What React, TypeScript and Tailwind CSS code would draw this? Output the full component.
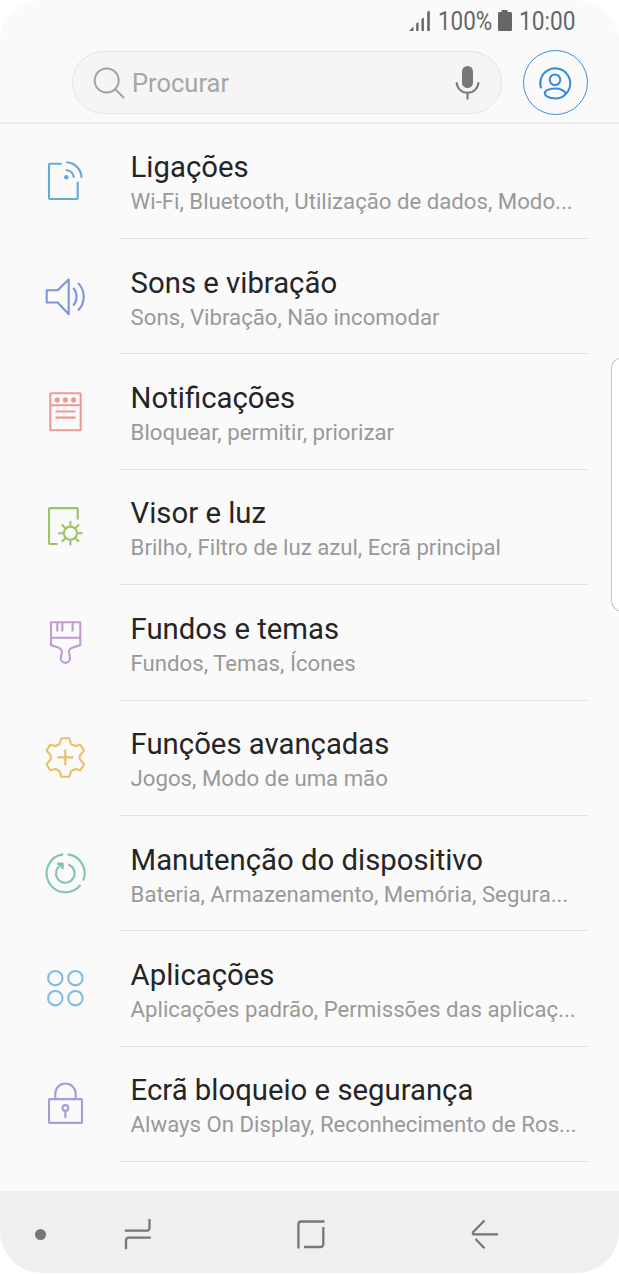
import React from 'react';

interface SettingsItem {
    title: string;
    summary: string;
    color: string;
    icon: React.ReactNode;
}

const sunRays = [0, 45, 90, 135, 180, 225, 270, 315];

const items: SettingsItem[] = [
    {
        title: 'Ligações',
        summary: 'Wi-Fi, Bluetooth, Utilização de dados, Modo...',
        color: 'text-[#66a9d3]',
        icon: (
            <>
                <path d="M18.7 4.7H7Q6 4.7 6 5.7V39Q6 40 7 40H33.7Q34.7 40 34.7 39V22.7" />
                <path d="M22.7 11A8.3 8.3 0 0 1 31 18.8M23.3 3.3A15.6 15.6 0 0 1 38.5 18.8" />
                <circle cx="23.3" cy="18.3" r="2.3" fill="currentColor" stroke="none" />
            </>
        ),
    },
    {
        title: 'Sons e vibração',
        summary: 'Sons, Vibração, Não incomodar',
        color: 'text-[#7f94da]',
        icon: (
            <>
                <path d="M3.7 15.3H14.7L25.7 4.5V39.2L14.7 27.5H3.7Z" />
                <path d="M30.3 13A13.5 13.5 0 0 1 30.3 30.6M35 8A19.5 19.5 0 0 1 35 35.6" />
            </>
        ),
    },
    {
        title: 'Notificações',
        summary: 'Bloquear, permitir, priorizar',
        color: 'text-[#ed9a91]',
        icon: (
            <>
                <rect x="7.3" y="3.2" width="30.4" height="37" rx="0.8" />
                <path d="M7.3 15.2H37.7M12.5 21.5H32.5M12.5 27.6H32.5" />
                <g fill="currentColor" stroke="none">
                    <circle cx="14.3" cy="9.9" r="2.6" />
                    <circle cx="22.4" cy="9.9" r="2.6" />
                    <circle cx="30.5" cy="9.9" r="2.6" />
                </g>
            </>
        ),
    },
    {
        title: 'Visor e luz',
        summary: 'Brilho, Filtro de luz azul, Ecrã principal',
        color: 'text-[#9fc364]',
        icon: (
            <>
                <path d="M34.7 14.5V4.1Q34.7 3.1 33.7 3.1H7Q6 3.1 6 4.1V38Q6 39 7 39H14.7" />
                <circle cx="27.4" cy="28.2" r="6.6" />
                {sunRays.map(a => (
                    <path key={a} d="M27.4 21.3V16" transform={`rotate(${a} 27.4 28.2)`} />
                ))}
            </>
        ),
    },
    {
        title: 'Fundos e temas',
        summary: 'Fundos, Temas, Ícones',
        color: 'text-[#c19bd2]',
        icon: (
            <>
                <path d="M8 1.2H37.3V24C32 26.5 26.7 25.8 26 30C25.7 32.5 27 34.5 27 37.3A4.6 4.6 0 0 1 17.8 37.3C17.8 34.5 19 32.5 18.8 30C18 25.8 13 26.5 8 24Z" />
                <path d="M8 16.7H37.3M14.3 1.2V10.4M19.3 1.2V10.4M29.6 1.2V10.4" />
            </>
        ),
    },
    {
        title: 'Funções avançadas',
        summary: 'Jogos, Modo de uma mão',
        color: 'text-[#eabf69]',
        icon: (
            <>
                <path d="M18.3 2.2H26.3L28 8L32.2 10L37.5 8.7L41 14.6L36.8 19.5V23.3L41 28.2L37.5 34.3L32.2 33L28 35.2L26.3 40.8H18.3L16.6 35.2L12.4 33L7.1 34.3L3.6 28.2L7.8 23.3V19.5L3.6 14.6L7.1 8.7L12.4 10L16.6 8Z" />
                <path d="M14.5 21.4H30.1M22.3 13.6V29.2" />
            </>
        ),
    },
    {
        title: 'Manutenção do dispositivo',
        summary: 'Bateria, Armazenamento, Memória, Segura...',
        color: 'text-[#80c4b2]',
        icon: (
            <>
                <path d="M24.8 2.4A19 19 0 0 1 40.2 28.6M37.6 32.9A19 19 0 1 1 20.2 2.4" />
                <path d="M25.3 12.6A9.3 9.3 0 1 1 15.5 15.1L19.3 11.8" />
                <path d="M14.2 11.8H19.5V17" strokeWidth="2.5" />
            </>
        ),
    },
    {
        title: 'Aplicações',
        summary: 'Aplicações padrão, Permissões das aplicaç...',
        color: 'text-[#80bce0]',
        icon: (
            <>
                <circle cx="12.3" cy="11.2" r="7.2" />
                <circle cx="32.4" cy="11.2" r="7.2" />
                <circle cx="12.3" cy="31.2" r="7.2" />
                <circle cx="32.4" cy="31.2" r="7.2" />
            </>
        ),
    },
    {
        title: 'Ecrã bloqueio e segurança',
        summary: 'Always On Display, Reconhecimento de Ros...',
        color: 'text-[#a99ae0]',
        icon: (
            <>
                <rect x="6" y="17.1" width="33" height="23.8" rx="0.8" />
                <path d="M12.3 17V11.7A10.2 10.2 0 0 1 32.7 11.7V17M22.4 29V36" />
                <circle cx="22.4" cy="26" r="2.9" />
            </>
        ),
    },
];

const StatusBar: React.FC = () => (
    <div className="flex h-[42px] items-center justify-end pr-[43px] text-[25.5px] leading-none text-[#666]">
        <svg width="23" height="22" viewBox="0 0 23 22" fill="currentColor" className="mr-[6px]">
            <path d="M0 21L4.5 16.5V21ZM7.2 13.5L9.5 12V21H7.2ZM12.5 9L14.9 7.5V21H12.5ZM18.2 2L20.8 .5V21H18.2Z" />
        </svg>
        <span className="w-[55px] shrink-0">
            <span className="inline-block origin-left translate-y-px scale-x-[0.88] whitespace-nowrap">100%</span>
        </span>
        <svg width="16" height="22" viewBox="0 0 16 22" fill="currentColor" className="mr-[6px] ml-[4px]">
            <path d="M4.5 0H10.5V2H13.5Q15 2 15 3.5V19.5Q15 21 13.5 21H2.5Q1 21 1 19.5V3.5Q1 2 2.5 2H4.5Z" />
        </svg>
        <span className="w-[57px] shrink-0">
            <span className="inline-block origin-left translate-y-px scale-x-[0.89] whitespace-nowrap">10:00</span>
        </span>
    </div>
);

const SearchBar: React.FC = () => (
    <div className="flex items-center pt-[8px] pr-[31px] pl-[72px]">
        <div className="flex h-[63px] w-[430px] items-center rounded-full border border-[#e4e4e4] bg-[#f5f5f5] pr-[17px] pl-[20px]">
            <svg width="34" height="34" viewBox="0 0 34 34" fill="none" stroke="#a2a2a2" strokeWidth="2">
                <circle cx="13.7" cy="14.5" r="12" />
                <path d="M22.5 23.5L31 32" />
            </svg>
            <span className="ml-[5px] flex-1 text-[25.5px] leading-[30px] text-[#a6a6a6]">Procurar</span>
            <svg width="32" height="36" viewBox="0 0 32 36" fill="none" stroke="#777" strokeWidth="2">
                <rect x="10" y="1" width="11" height="22" rx="5.5" fill="#777" stroke="none" />
                <path d="M4.6 17.3C5 23.5 9.5 27.8 15.5 27.8S26.1 23.5 26.5 17.3M15.5 27.8V34.5" />
            </svg>
        </div>
        <button className="ml-[21px] flex size-[65px] items-center justify-center rounded-full border border-[#3f8ddb]">
            <svg width="36" height="36" viewBox="0 0 36 36" fill="none" stroke="#3589dc" strokeWidth="2" className="-ml-px">
                <path d="M4.1 23.4A15 15 0 1 1 29 28.8" />
                <circle cx="18" cy="14.7" r="5.3" />
                <path d="M29 28.8C27 25 23 23.4 18 23.4C12 23.4 7.8 25.7 7.8 28.2C7.8 31 12.5 33.4 18 33.4C22.5 33.4 26.5 31.8 29 28.8Z" />
            </svg>
        </button>
    </div>
);

const SettingsRow: React.FC<{ item: SettingsItem }> = ({ item }) => (
    <li className="flex h-[115.4px] pr-[31px] pl-[43px]">
        <div className={`flex w-[77px] shrink-0 items-center ${item.color}`}>
            <svg width="44" height="44" viewBox="0 0 44 44" fill="none" stroke="currentColor" strokeWidth="2.1" strokeLinejoin="round" className="overflow-visible">
                {item.icon}
            </svg>
        </div>
        <div className="min-w-0 flex-1 border-b border-[#e3e3e3] pt-[25.7px] pl-[10.6px] whitespace-nowrap">
            <h2 className="text-[29.3px] leading-9 text-[#252525]">{item.title}</h2>
            <p className="mt-[2px] text-[22.2px] leading-7 text-[#999]">{item.summary}</p>
        </div>
    </li>
);

const NavBar: React.FC = () => (
    <nav className="flex h-[82px] items-start bg-[#efefef] pt-[27px] pl-[35px] text-[#777]">
        <span className="mt-[11px] size-[11px] rounded-full bg-[#777]" />
        <svg width="32" height="32" viewBox="0 0 32 32" fill="none" stroke="currentColor" strokeWidth="2.3" className="ml-[76px]">
            <path d="M2.8 12.7H24.5Q27.5 12.7 27.5 9.7V1M28.8 19.7H7Q4 19.7 4 22.7V31.3" />
        </svg>
        <svg width="32" height="32" viewBox="0 0 32 32" fill="none" stroke="currentColor" strokeWidth="2.3" className="ml-[141px]">
            <path d="M3.4 30.5V6.5Q3.4 3.5 6.4 3.5H29.5M28.3 9V26Q28.3 29 25.3 29H9" />
        </svg>
        <svg width="32" height="32" viewBox="0 0 32 32" fill="none" stroke="currentColor" strokeWidth="2.3" strokeLinejoin="round" className="ml-[142px]">
            <path d="M15.5 2.5L4 14.3Q3.5 16.4 5 16.4H29M6.5 21L15.5 30.3" />
        </svg>
    </nav>
);

const App: React.FC = () => (
    <div className="h-[1274px] w-[619px] overflow-hidden bg-white font-[Roboto,sans-serif]">
        <div className="relative flex h-[1273px] flex-col overflow-hidden rounded-[42px] bg-[#fafafa]">
            <header className="h-[123.6px] shrink-0 border-b-2 border-[#ebebeb]">
                <StatusBar />
                <SearchBar />
            </header>
            <ul className="flex-1">
                {items.map(item => (
                    <SettingsRow key={item.title} item={item} />
                ))}
            </ul>
            <NavBar />
            {/* edge panel handle */}
            <div className="absolute top-[357px] -right-[4px] h-[255px] w-[12px] rounded-l-[12px] border border-r-0 border-[#c4c4c4] bg-white" />
        </div>
    </div>
);

export default App;
